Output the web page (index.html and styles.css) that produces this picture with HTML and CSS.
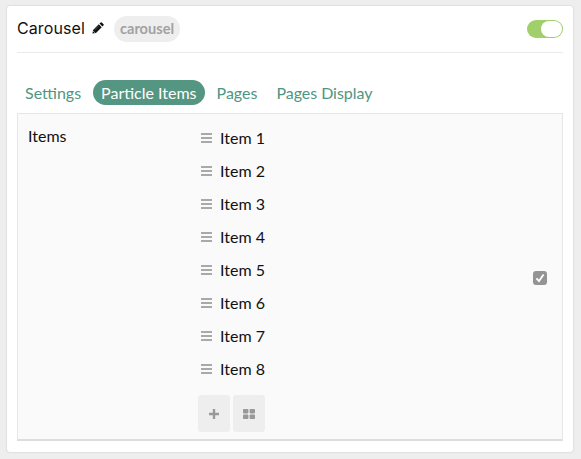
FILE: index.html
```html
<!DOCTYPE html>
<html lang="en">
<head>
<meta charset="utf-8">
<title>Carousel</title>
<link rel="stylesheet" href="styles.css">
</head>
<body>
<svg class="defs" width="0" height="0"><symbol id="bars" viewBox="0 0 11 10"><path d="M0 1h11M0 5h11M0 9h11" stroke="#8e8e8e" stroke-width="1.5"/></symbol></svg>
<main class="card">
  <header class="head">
    <h1 class="title">Carousel</h1>
    <svg class="pencil" width="12" height="12" viewBox="0 0 12 12"><path d="M.4 11.6l.7-3.6L6.8 2.3l2.9 2.9L4 10.9zM7.5 1.6L8.7.4q.5-.4 1 0l1.9 1.9q.4.5 0 1l-1.2 1.2z" fill="#111"/><path d="M2.5 8.2L6.8 3.9" stroke="#777" stroke-width=".6"/><path d="M1.3 9.2l1.5 1.5" stroke="#fff" stroke-width=".8"/></svg>
    <span class="tag">carousel</span>
    <span class="toggle"><span class="knob"></span></span>
  </header>
  <nav class="tabs">
    <a class="tab">Settings</a>
    <a class="tab active">Particle Items</a>
    <a class="tab">Pages</a>
    <a class="tab last">Pages Display</a>
  </nav>
  <section class="panel">
    <div class="label">Items</div>
    <div class="field">
      <ul class="list">
        <li><svg class="bars"><use href="#bars"/></svg>Item 1</li>
        <li><svg class="bars"><use href="#bars"/></svg>Item 2</li>
        <li><svg class="bars"><use href="#bars"/></svg>Item 3</li>
        <li><svg class="bars"><use href="#bars"/></svg>Item 4</li>
        <li><svg class="bars"><use href="#bars"/></svg>Item 5</li>
        <li><svg class="bars"><use href="#bars"/></svg>Item 6</li>
        <li><svg class="bars"><use href="#bars"/></svg>Item 7</li>
        <li><svg class="bars"><use href="#bars"/></svg>Item 8</li>
      </ul>
      <div class="buttons">
        <span class="btn"><svg width="10" height="10" viewBox="0 0 10 10"><path d="M5 0v10M0 5h10" stroke="#999" stroke-width="2.4"/></svg></span>
        <span class="btn"><svg width="12" height="10" viewBox="0 0 12 10" fill="#999"><rect width="5.4" height="4.4" rx=".8"/><rect x="6.6" width="5.4" height="4.4" rx=".8"/><rect y="5.6" width="5.4" height="4.4" rx=".8"/><rect x="6.6" y="5.6" width="5.4" height="4.4" rx=".8"/></svg></span>
      </div>
    </div>
    <span class="check"><svg width="14" height="14" viewBox="0 0 14 14"><path d="M3.4 7.4l2.6 2.7 4.6-6.5" fill="none" stroke="#fff" stroke-width="1.8"/></svg></span>
  </section>
</main>
</body>
</html>
```
FILE: styles.css
```css
* { box-sizing: border-box; }
body {
  margin: 0;
  padding: 6px 8px 6px 7px;
  background: #eee;
  color: #111;
  font: 16px/24px Lato, sans-serif;
}
.defs { display: block; height: 0; }
.card {
  height: 446px;
  padding: 0 10px;
  background: #fff;
  border-radius: 3px;
  box-shadow: 0 0 2px rgba(0, 0, 0, .2);
}
.head {
  display: flex;
  align-items: center;
  height: 47px;
  border-bottom: 1px solid #eaeaea;
}
.title {
  width: 68px;
  margin: 0 7px 2px 0;
  font: 400 16px/24px Inter, sans-serif;
  letter-spacing: .1px;
  white-space: nowrap;
}
.pencil { margin-right: 10px; margin-bottom: 3px; }
.tag {
  height: 26px;
  width: 66px;
  border-radius: 13px;
  background: #eee;
  color: #a2a2a2;
  font-size: 14.6px;
  font-weight: 700;
  line-height: 26px;
  text-align: center;
}
.toggle {
  display: flex;
  justify-content: flex-end;
  width: 36px;
  height: 18px;
  margin-left: auto;
  padding: 1px;
  border-radius: 9px;
  background: #a1cf6b;
}
.knob { width: 21px; border-radius: 9px; background: #fff; }
.tabs {
  display: flex;
  gap: 4px;
  height: 60px;
  padding: 27px 0 0;
}
.tab {
  height: 25px;
  padding: 0 8px;
  border-radius: 12.5px;
  color: #4f9680;
  line-height: 26px;
  white-space: nowrap;
}
.active { background: #559682; color: #fff; }
.last { margin-left: -1px; letter-spacing: -.04px; }
.panel {
  display: flex;
  height: 328px;
  padding: 8px 15px 0 10px;
  background: #fafafa;
  border: 1px solid #e6e6e6;
  border-bottom: 2px solid #ddd;
}
.label { width: 170px; line-height: 28px; }
.field { flex: 1; }
.list { margin: -1px 0 0; padding: 0; list-style: none; }
.list li {
  display: flex;
  align-items: center;
  height: 33px;
  padding-left: 2px;
}
.bars { width: 11px; height: 10px; margin: 0 8.5px 0 .5px; }
.buttons { display: flex; gap: 3px; padding-top: 10px; }
.btn {
  display: flex;
  align-items: center;
  justify-content: center;
  width: 32px;
  height: 37px;
  border-radius: 3px;
  background: #eee;
}
.check {
  display: flex;
  align-self: center;
  width: 14px;
  height: 14px;
  margin-bottom: 6px;
  border-radius: 3px;
  background: #949494;
}
```
